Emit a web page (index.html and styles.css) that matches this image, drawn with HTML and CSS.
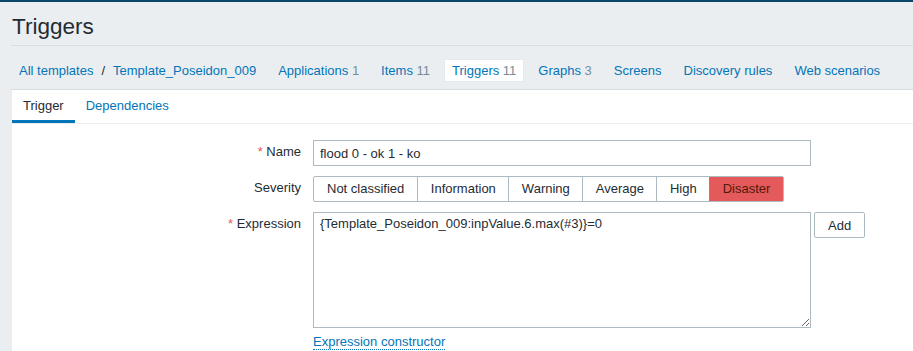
FILE: index.html
```html
<!DOCTYPE html>
<html lang="en">
<head>
    <meta charset="UTF-8">
    <meta name="viewport" content="width=device-width, initial-scale=1.0">
    <title>Triggers</title>
    <link rel="stylesheet" href="styles.css">
</head>
<body>

<header class="page-header">
    <h1>Triggers</h1>
</header>

<nav class="breadcrumbs">
    <a class="nav-item" href="#">All templates</a>
    <span class="sep">/</span>
    <a class="nav-item" href="#">Template_Poseidon_009</a>
    <a class="nav-item gap" href="#">Applications <span class="count">1</span></a>
    <a class="nav-item" href="#">Items <span class="count">11</span></a>
    <a class="nav-item active" href="#">Triggers <span class="count">11</span></a>
    <a class="nav-item" href="#">Graphs <span class="count">3</span></a>
    <a class="nav-item" href="#">Screens</a>
    <a class="nav-item" href="#">Discovery rules</a>
    <a class="nav-item" href="#">Web scenarios</a>
</nav>

<div class="panel">
    <ul class="tabs">
        <li class="tab selected">Trigger</li>
        <li class="tab"><a href="#">Dependencies</a></li>
    </ul>

    <form class="form-grid">
        <label class="form-label" for="name"><span class="req">*</span> Name</label>
        <div class="form-field">
            <input type="text" id="name" class="text-input" value="flood 0 - ok 1 - ko">
        </div>

        <label class="form-label">Severity</label>
        <div class="form-field">
            <div class="severity">
                <span class="sev">Not classified</span>
                <span class="sev">Information</span>
                <span class="sev">Warning</span>
                <span class="sev">Average</span>
                <span class="sev">High</span>
                <span class="sev disaster">Disaster</span>
            </div>
        </div>

        <label class="form-label" for="expression"><span class="req">*</span> Expression</label>
        <div class="form-field">
            <div class="expr-row">
                <textarea id="expression" class="expr-input">{Template_Poseidon_009:inpValue.6.max(#3)}=0</textarea>
                <button type="button" class="btn-alt">Add</button>
            </div>
            <div class="link-row">
                <a class="dotted-link" href="#">Expression constructor</a>
            </div>
        </div>
    </form>
</div>

</body>
</html>
```

FILE: styles.css
```css
body {
    margin: 0;
    background-color: #ebeef0;
    font-family: "Liberation Sans", Arial, sans-serif;
    font-size: 13px;
    color: #1f2c33;
    border-top: 2px solid #0a466a;
    overflow: hidden;
}
a {
    color: #0275b8;
    text-decoration: none;
}
.page-header {
    margin-left: 11px;
    padding: 12px 0 6px 1px;
    border-bottom: 1px solid #d8dde0;
}
.page-header h1 {
    margin: 0;
    font-size: 22.5px;
    font-weight: normal;
    line-height: 25px;
}
.breadcrumbs {
    display: flex;
    align-items: center;
    margin-left: 11px;
    padding: 13px 0 7px;
    border-bottom: 1px solid #d8dde0;
    white-space: nowrap;
}
.nav-item {
    line-height: 21px;
    padding: 0 7px;
    border: 1px solid transparent;
    border-radius: 2px;
    margin-right: 6px;
}
.breadcrumbs .nav-item:first-child,
.breadcrumbs .nav-item:nth-child(3) {
    margin-right: 0;
}
.nav-item.gap {
    margin-left: 6px;
}
.nav-item.active {
    background-color: #fff;
    border-color: #e6eaec;
}
.count {
    color: #768d99;
}
.panel {
    margin-left: 12px;
    background-color: #fff;
    min-height: 300px;
}
.tabs {
    display: flex;
    list-style: none;
    margin: 0;
    padding: 0;
    border-bottom: 1px solid #ebeef0;
}
.tab {
    padding: 2px 11px 0;
    line-height: 28px;
    border-bottom: 3px solid transparent;
}
.tab.selected {
    border-bottom-color: #0275b8;
}
.form-grid {
    display: grid;
    grid-template-columns: 289px 1fr;
    column-gap: 12px;
    row-gap: 10px;
    padding-top: 16px;
}
.form-label {
    text-align: right;
    line-height: 24px;
    align-self: start;
}
.req {
    color: #e45959;
}
.text-input {
    box-sizing: border-box;
    width: 498px;
    height: 26px;
    margin: 0;
    padding: 0 6px;
    border: 1px solid #acbbc2;
    font-family: inherit;
    font-size: 13px;
    color: #1f2c33;
    outline: none;
}
.severity {
    display: inline-flex;
    border: 1px solid #acbbc2;
    border-radius: 2px;
}
.sev {
    line-height: 24px;
    padding: 0 12.5px;
    border-left: 1px solid #acbbc2;
}
.sev:first-child {
    border-left: none;
    padding: 0 13px;
}
.sev.disaster {
    background-color: #e45959;
    color: #52190b;
    border-left-color: #7d8e96;
}
.expr-row {
    display: flex;
    align-items: flex-start;
}
.expr-input {
    box-sizing: border-box;
    width: 498px;
    height: 116px;
    margin: 0;
    padding: 3px 6px;
    border: 1px solid #acbbc2;
    font-family: inherit;
    font-size: 13px;
    line-height: 15px;
    color: #1f2c33;
    outline: none;
}
.btn-alt {
    height: 26px;
    margin-left: 3px;
    padding: 0 13px;
    background-color: #fff;
    border: 1px solid #acbbc2;
    border-radius: 2px;
    font-family: inherit;
    font-size: 13px;
    color: #1f2c33;
}
.link-row {
    margin-top: 5px;
    line-height: 18px;
}
.dotted-link {
    border-bottom: 1px dotted #0275b8;
}
```
